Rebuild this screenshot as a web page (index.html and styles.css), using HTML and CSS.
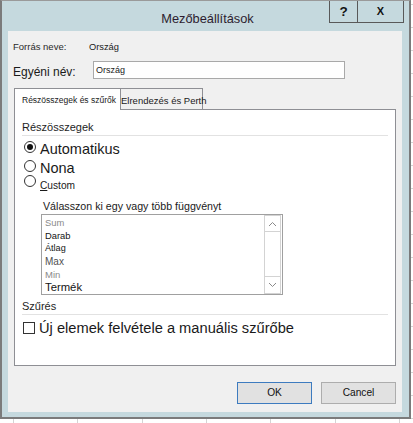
FILE: index.html
```html
<!DOCTYPE html>
<html lang="hu">
<head>
<meta charset="utf-8">
<title>Mezőbeállítások</title>
<link rel="stylesheet" href="styles.css">
</head>
<body>
<div class="window">
  <div class="titlebar">
    <div class="title">Mezőbeállítások</div>
    <div class="controls"><span class="ctl help">?</span><span class="ctl close">X</span></div>
  </div>
  <div class="content">
    <div class="row source"><span class="lbl">Forrás neve:</span><span class="val">Ország</span></div>
    <div class="row custom-name"><span class="name-lbl">Egyéni név:</span><div class="input">Ország</div></div>
    <div class="tabs">
      <div class="tab active">Részösszegek és szűrők</div>
      <div class="tab inactive">Elrendezés és Perth</div>
    </div>
    <div class="panel">
      <div class="section">Részösszegek</div>
      <div class="sep"></div>
      <div class="options">
        <div class="radio-row big"><span class="radio checked"></span><span>Automatikus</span></div>
        <div class="radio-row big"><span class="radio"></span><span>Nona</span></div>
        <div class="radio-row small"><span class="radio"></span><span><u>C</u>ustom</span></div>
      </div>
      <div class="prompt">Válasszon ki egy vagy több függvényt</div>
      <div class="listbox">
        <div class="items">
          <div class="item gray">Sum</div>
          <div class="item dark">Darab</div>
          <div class="item dark atlag">Átlag</div>
          <div class="item mid">Max</div>
          <div class="item gray min">Min</div>
          <div class="item dark big-item">Termék</div>
        </div>
        <div class="scrollbar">
          <div class="sb-btn up"><svg width="9" height="6" viewBox="0 0 9 6"><path d="M1 5 L4.5 1.5 L8 5" fill="none" stroke="#8a8a8a" stroke-width="1"/></svg></div>
          <div class="sb-track"></div>
          <div class="sb-btn down"><svg width="9" height="6" viewBox="0 0 9 6"><path d="M1 1 L4.5 4.5 L8 1" fill="none" stroke="#8a8a8a" stroke-width="1"/></svg></div>
        </div>
      </div>
      <div class="section filters">Szűrés</div>
      <div class="sep"></div>
      <div class="check-row"><span class="checkbox"></span><span>Új elemek felvétele a manuális szűrőbe</span></div>
    </div>
    <div class="buttons">
      <button class="btn default">OK</button>
      <button class="btn">Cancel</button>
    </div>
  </div>
</div>
</body>
</html>
```

FILE: styles.css
```css
html, body {
  margin: 0;
  padding: 0;
}
body {
  width: 413px;
  height: 423px;
  overflow: hidden;
  font-family: "Liberation Sans", Arial, sans-serif;
  background-color: #ffffff;
  background-image:
    repeating-linear-gradient(to bottom, transparent 0 4px, #d4d4d4 4px 5px, transparent 5px 23px),
    repeating-linear-gradient(to right, transparent 0 13px, #d4d4d4 13px 14px, transparent 14px 64.3px);
}
.window {
  box-sizing: border-box;
  width: 411px;
  height: 419px;
  border: 2px solid #7b7b7b;
  border-top: 1px solid #9a9a9a;
  background: #c5d9de;
  display: flex;
  flex-direction: column;
}
.titlebar {
  flex: none;
  height: 30px;
  display: grid;
  grid-template-columns: 1fr auto 1fr;
}
.title {
  grid-column: 2;
  padding: 10px 0 0 4px;
  font-size: 12.8px;
  line-height: 15px;
  color: #2d1d30;
}
.controls {
  grid-column: 3;
  justify-self: end;
  align-self: start;
  display: flex;
  margin-right: 5px;
}
.ctl {
  box-sizing: border-box;
  height: 22px;
  border: 1px solid #595959;
  border-top: none;
  text-align: center;
  font-weight: bold;
  line-height: 21px;
  color: #111;
}
.help {
  width: 29px;
  font-size: 13.5px;
}
.close {
  width: 46px;
  border-left: none;
  font-size: 11px;
}
.content {
  flex: 1;
  margin: 0 7px 5px 6px;
  background: #f0f0f0;
  padding: 10px 0 0 5px;
  display: flex;
  flex-direction: column;
}
.row {
  display: flex;
  flex: none;
}
.source {
  font-size: 9.5px;
  line-height: 12px;
  color: #2a2a2a;
}
.source .lbl {
  width: 76px;
}
.source .val {
  font-size: 9.3px;
  color: #1a1a1a;
}
.custom-name {
  margin-top: 8px;
  height: 18px;
}
.name-lbl {
  width: 80px;
  font-size: 12px;
  line-height: 23px;
  color: #1a1a1a;
}
.input {
  box-sizing: border-box;
  width: 252px;
  height: 18px;
  border: 1px solid #a9a9a9;
  background: #fff;
  font-size: 9px;
  line-height: 15px;
  padding: 1px 0 0 2px;
  color: #1a1a1a;
}
.tabs {
  flex: none;
  display: flex;
  align-items: flex-start;
  margin: 9px 0 0 1px;
  height: 21px;
}
.tab {
  box-sizing: border-box;
  white-space: nowrap;
  color: #1a1a1a;
}
.tab.active {
  position: relative;
  z-index: 1;
  width: 107px;
  height: 22px;
  background: #fff;
  border: 1px solid #8e8f94;
  border-bottom: none;
  padding: 4px 0 0 7px;
  font-size: 8.5px;
  line-height: 15px;
}
.tab.inactive {
  width: 82px;
  height: 21px;
  background: #f0f0f0;
  border-top: 1px solid #8e8f94;
  border-right: 1px solid #8e8f94;
  padding: 4px 0 0 0;
  font-size: 9.5px;
  line-height: 15px;
}
.panel {
  flex: none;
  box-sizing: border-box;
  width: 382px;
  height: 257px;
  margin-left: 1px;
  border: 1px solid #8e8f94;
  background: #fff;
  padding: 10px 7px 0 7px;
  color: #1a1a1a;
}
.section {
  font-size: 11px;
  line-height: 14px;
  color: #1e1e1e;
}
.sep {
  height: 1px;
  margin-top: 1px;
  background: #e2e2e2;
}
.options {
  margin-top: 4px;
}
.radio-row {
  display: flex;
  align-items: flex-start;
}
.radio-row.big {
  font-size: 14.5px;
  line-height: 19px;
}
.radio-row.small {
  font-size: 10.2px;
  line-height: 15px;
}
.radio {
  flex: none;
  box-sizing: border-box;
  width: 12px;
  height: 12px;
  border: 1px solid #333;
  border-radius: 50%;
  background: #fff;
  margin: 1px 4px 0 2px;
  display: flex;
  align-items: center;
  justify-content: center;
}
.radio-row.small .radio {
  margin-top: -3px;
}
.radio.checked::after {
  content: "";
  width: 6px;
  height: 6px;
  border-radius: 50%;
  background: #111;
}
.prompt {
  margin: 6px 0 0 21px;
  font-size: 10.66px;
  line-height: 14px;
}
.listbox {
  box-sizing: border-box;
  width: 242px;
  height: 81px;
  margin: 1px 0 0 19px;
  border: 1px solid #a0a0a0;
  display: flex;
}
.items {
  flex: 1;
  padding: 1px 0 0 3px;
}
.item {
  height: 13px;
  line-height: 13px;
  font-size: 9.4px;
  white-space: nowrap;
}
.item.gray { color: #8a8a8a; }
.item.dark { color: #141414; }
.item.mid { color: #505050; font-size: 10px; }
.item.atlag { font-size: 9.1px; }
.item.min { font-size: 9.5px; }
.item.big-item { font-size: 11.3px; }
.scrollbar {
  box-sizing: border-box;
  width: 17px;
  margin-right: 1px;
  border: 1px solid #d3d3d3;
  display: flex;
  flex-direction: column;
}
.sb-btn {
  box-sizing: border-box;
  display: flex;
  align-items: center;
  justify-content: center;
}
.sb-btn.up {
  height: 16px;
  border-bottom: 1px solid #d3d3d3;
}
.sb-btn.down {
  height: 17px;
  border-top: 1px solid #d3d3d3;
}
.sb-track {
  flex: 1;
}
.filters {
  margin-top: 4px;
}
.check-row {
  margin-top: 4px;
  display: flex;
  align-items: flex-start;
  font-size: 14.66px;
  line-height: 18px;
}
.checkbox {
  flex: none;
  box-sizing: border-box;
  width: 12px;
  height: 12px;
  border: 1px solid #333;
  background: #fff;
  margin: 3px 4px 0 1px;
}
.buttons {
  flex: none;
  display: flex;
  justify-content: flex-end;
  gap: 9px;
  margin-top: 16px;
  padding-right: 6px;
}
.btn {
  box-sizing: border-box;
  width: 75px;
  height: 22px;
  border: 1px solid #adadad;
  background: #e1e1e1;
  font-family: "Liberation Sans", Arial, sans-serif;
  font-size: 10.2px;
  line-height: 20px;
  padding: 0;
  color: #111;
}
.btn.default {
  border-color: #3d7bbf;
}
```
